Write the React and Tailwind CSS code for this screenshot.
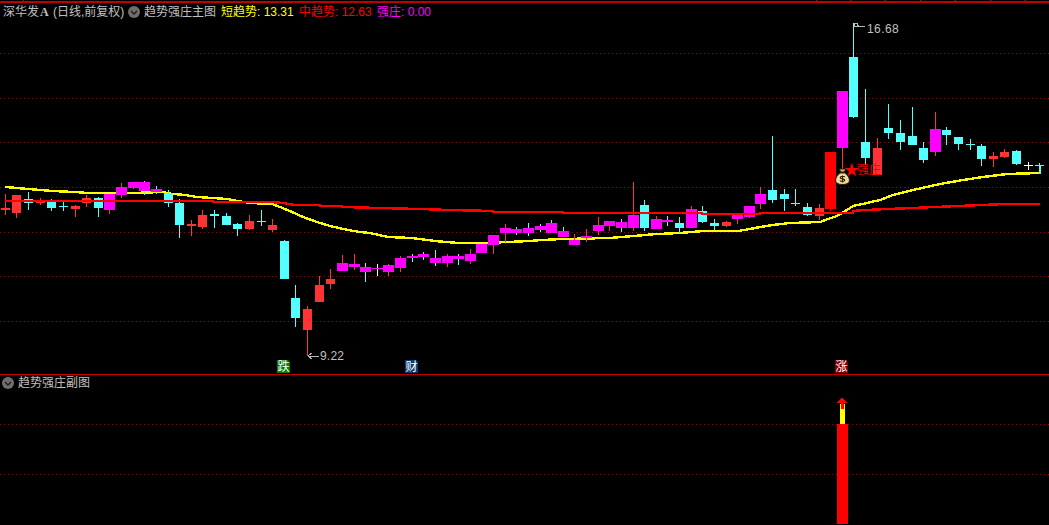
const FONT = "font-['Liberation_Sans','Noto_Sans_CJK_SC',sans-serif]";

const r = "#ff3333";
const c = "#54ffff";
const m = "#ff00ff";
const w = "#ffffff";

// left, width, body top, body bottom, wick top, wick bottom, colour, wick colour
const candles = [
  [1, 9, 208, 210, 194, 215, r],
  [12, 9, 195, 213, 195, 218, r],
  [24, 9, 199, 203, 192, 210, c],
  [36, 9, 202, 203, 198, 205, r],
  [47, 9, 202, 208, 199, 211, c],
  [59, 9, 206, 207, 202, 211, c],
  [71, 9, 206, 209, 205, 217, r],
  [82, 9, 198, 203, 195, 207, r],
  [94, 9, 198, 208, 197, 217, c],
  [104, 11, 194, 210, 194, 214, m, r],
  [116, 11, 187, 195, 183, 198, m, r],
  [128, 11, 182, 188, 182, 189, m, r],
  [139, 11, 182, 191, 181, 195, m, c],
  [151, 11, 189, 192, 186, 194, m, c],
  [164, 9, 193, 203, 190, 207, c],
  [175, 9, 203, 225, 199, 238, c],
  [187, 9, 224, 226, 220, 236, r],
  [198, 9, 215, 227, 210, 229, r],
  [210, 9, 214, 216, 210, 228, c],
  [222, 9, 216, 225, 213, 225, c],
  [233, 9, 224, 229, 223, 236, c],
  [245, 9, 221, 229, 215, 230, r],
  [257, 9, 221, 222, 210, 226, c],
  [268, 9, 225, 230, 219, 232, r],
  [280, 9, 241, 279, 240, 279, c],
  [291, 9, 298, 318, 285, 327, c],
  [303, 9, 309, 330, 306, 356, r],
  [315, 9, 285, 302, 276, 302, r],
  [326, 9, 279, 284, 269, 289, r],
  [337, 11, 263, 271, 255, 271, m, r],
  [349, 11, 264, 267, 254, 270, m, r],
  [360, 11, 267, 272, 263, 282, m, c],
  [372, 11, 268, 269, 264, 276, m, w],
  [383, 11, 265, 272, 264, 276, m, r],
  [395, 11, 258, 268, 256, 272, m, r],
  [407, 11, 256, 258, 254, 262, m, c],
  [418, 11, 254, 257, 252, 260, m, c],
  [430, 11, 258, 263, 250, 266, m, c],
  [442, 11, 256, 263, 254, 267, m, r],
  [453, 11, 256, 259, 254, 265, m, c],
  [465, 11, 254, 261, 249, 264, m, r],
  [476, 11, 244, 253, 244, 253, m],
  [488, 11, 235, 245, 235, 254, m, r],
  [500, 11, 228, 233, 224, 242, m, r],
  [511, 11, 229, 233, 227, 235, m, c],
  [523, 11, 228, 233, 223, 236, m, c],
  [535, 11, 226, 230, 224, 232, m, c],
  [546, 11, 223, 233, 220, 233, m, c],
  [558, 11, 231, 237, 227, 237, m, c],
  [569, 11, 240, 245, 234, 245, m, r],
  [581, 11, 236, 238, 229, 242, m, r],
  [593, 11, 225, 231, 217, 235, m, r],
  [604, 11, 221, 226, 221, 231, m, r],
  [616, 11, 222, 228, 219, 232, m, c],
  [628, 11, 215, 228, 182, 231, m, r],
  [640, 9, 205, 228, 200, 231, c],
  [651, 11, 219, 229, 216, 229, m, r],
  [662, 11, 220, 222, 216, 226, m, c],
  [675, 9, 223, 228, 217, 233, c],
  [686, 11, 209, 228, 206, 228, m, r],
  [698, 9, 211, 222, 206, 223, c],
  [710, 9, 223, 226, 219, 230, c],
  [722, 9, 222, 226, 221, 227, r],
  [732, 11, 215, 219, 215, 224, m, r],
  [744, 11, 206, 217, 206, 218, m, r],
  [755, 11, 194, 204, 187, 209, m, r],
  [768, 9, 190, 200, 136, 203, c],
  [780, 9, 194, 199, 189, 211, c],
  [791, 9, 203, 204, 189, 206, c],
  [803, 9, 207, 215, 203, 216, c],
  [815, 9, 208, 216, 204, 220, r],
  [825, 11, 152, 209, 152, 211, "#ff0000"],
  [837, 11, 91, 148, 91, 170, m, r],
  [849, 9, 57, 117, 23, 118, c],
  [861, 9, 142, 158, 89, 165, c],
  [873, 9, 148, 175, 138, 175, r],
  [884, 9, 128, 133, 104, 139, c],
  [896, 9, 133, 142, 120, 150, c],
  [908, 9, 136, 145, 107, 145, c],
  [919, 9, 148, 160, 142, 163, c],
  [930, 11, 129, 152, 112, 156, m, r],
  [942, 9, 130, 135, 127, 145, c],
  [954, 9, 137, 144, 137, 150, c],
  [966, 9, 144, 145, 139, 150, c],
  [977, 9, 146, 159, 144, 166, c],
  [989, 9, 156, 159, 152, 167, r],
  [1000, 9, 152, 157, 149, 158, r],
  [1012, 9, 151, 164, 150, 165, c],
  [1024, 9, 165, 166, 162, 170, w],
  [1035, 9, 165, 166, 163, 174, c],
];

const yellowLine =
  "5,187 17,188 28,189 40,190 52,191 75,192 87,193 115,193 133,193 162,192 173,194 185,195 197,197 213,198 227,199 238,201 250,203 272,204 280,207 292,212 303,217 317,222 330,226 348,230 360,232 370,233 388,237 412,238 435,241 458,243 487,243 507,242 530,241 542,240 563,239 610,238 622,237 645,235 657,234 680,233 692,232 703,231 738,231 750,229 760,227 773,225 790,223 820,222 828,219 837,216 847,210 853,206 867,203 880,200 893,195 913,190 940,184 963,180 983,177 1007,174 1040,173";

const redLine =
  "5,201 213,201 213,202 272,202 283,203 295,205 320,205 320,206 342,206 342,207 380,208 420,209 450,210 493,211 493,212 563,212 563,213 702,213 702,214 760,214 760,213 853,213 853,211 865,210 888,209 912,208 935,207 958,206 982,205 1005,204 1040,204";

const gridTop = [53, 98, 142, 187, 232, 276, 321];
const gridBottom = [424, 474];
const ticks = [23, 816, 850, 885, 920, 955, 990, 1025];

function Toggle() {
  return (
    <svg width="12" height="12" viewBox="0 0 12 12" className="shrink-0">
      <circle cx="6" cy="6" r="6" fill="#6e6e6e" />
      <path d="M3 5l3 3 3-3" fill="none" stroke="#1c1c1c" strokeWidth="1.4" />
    </svg>
  );
}

function Candle({ data }) {
  const [left, width, top, bottom, wickTop, wickBottom, color, wick] = data;
  return (
    <g>
      <rect x={left + Math.floor(width / 2)} y={wickTop} width="1" height={wickBottom - wickTop} fill={wick || color} />
      <rect x={left} y={top} width={width} height={bottom - top} fill={color} />
    </g>
  );
}

function MoneyBag() {
  return (
    <svg width="15" height="17" viewBox="0 0 15 17" className="absolute left-[835px] top-[168px]">
      <path d="M4 1h7l-2 3h-3z" fill="#e0b860" stroke="#2e1e08" strokeWidth="1" />
      <path d="M5.500 4.500h4c3 2 5 5 5 8 0 3-3 4-7 4s-7-1-7-4c0-3 2-6 5-8z" fill="#efdca0" stroke="#2e1e08" strokeWidth="1.1" />
      <path d="M5 5.500h5" stroke="#a87828" strokeWidth="1" />
      <path d="M9.800 9c-.6-1-4.400-1-4.600.5-.2 1.700 4.800 1 4.600 2.800-.2 1.500-4.200 1.400-4.800.2M7.500 7.500v7" fill="none" stroke="#2e1e08" strokeWidth="1.1" />
    </svg>
  );
}

function Badge({ text, left, color }) {
  return (
    <span
      className={`absolute top-[360px] flex h-[13px] w-[13px] items-center justify-center overflow-hidden text-[12px] leading-none text-white [clip-path:polygon(0_0,85%_0,100%_15%,100%_100%,0_100%)] ${color} ${left}`}
    >
      {text}
    </span>
  );
}

export default function App() {
  return (
    <div className={`flex h-[525px] w-full flex-col overflow-hidden bg-black text-[12px] leading-none text-[#c0c0c0] ${FONT}`}>
      <section className="relative h-[374px] shrink-0">
        <svg width="1049" height="374" viewBox="0 0 1049 374" shapeRendering="crispEdges" className="absolute inset-0">
          <rect x="0" y="1" width="1049" height="2" fill="#c00000" />
          {ticks.map((x) => (
            <rect key={x} x={x} y="0" width="1" height="2" fill="#c00000" />
          ))}
          {gridTop.map((y) => (
            <line key={y} x1="0" x2="1049" y1={y + 0.5} y2={y + 0.5} stroke="#a00000" strokeDasharray="1 3" />
          ))}
          <polyline points={yellowLine} fill="none" stroke="#ffff00" strokeWidth="2.4" />
          <rect x="1040" y="165" width="1" height="9" fill={c} />
          {candles.map((item) => (
            <Candle key={item[0]} data={item} />
          ))}
          <polyline points={redLine} fill="none" stroke="#ff0000" strokeWidth="2.4" />
          <path d="M854 23h3v3h-3zM857 25l3 2 3-1 2 1" fill="none" stroke="#b8b8b8" />
          <path d="M308 356h11M308 356l4-3M308 356l4 3" fill="none" stroke="#b8b8b8" />
        </svg>

        <header className="relative flex items-center whitespace-nowrap pl-[3px] pt-[6px]">
          <span>深华发</span>
          <span className="ml-[1px] w-[10px] font-['Liberation_Serif',serif] font-bold">A</span>
          <span className="ml-[3px] w-[75px]">(日线,前复权)</span>
          <Toggle />
          <span className="ml-[4px] w-[77px]">趋势强庄主图</span>
          <span className="w-[78px] text-[#ffff00]">短趋势: 13.31</span>
          <span className="w-[78px] text-[#ff0000]">中趋势: 12.63</span>
          <span className="text-[#ff00ff]">强庄: 0.00</span>
        </header>

        <span className="absolute left-[867px] top-[23px] tracking-[0.4px]">16.68</span>
        <span className="absolute left-[320px] top-[350px] tracking-[0.2px]">9.22</span>
        <div className="absolute left-[844px] top-[162px] flex items-center text-[#ff0000]">
          <span className="w-[13px] text-[15px]">★</span>
          <span>强庄</span>
        </div>
        <MoneyBag />
        <Badge text="跌" left="left-[277px]" color="bg-[#007f00]" />
        <Badge text="财" left="left-[405px]" color="bg-[#0c3c70]" />
        <Badge text="涨" left="left-[835px]" color="bg-[#800000]" />
      </section>

      <section className="relative flex-1 border-t border-[#c00000]">
        <svg width="1049" height="150" viewBox="0 375 1049 150" shapeRendering="crispEdges" className="absolute inset-0">
          {gridBottom.map((y) => (
            <line key={y} x1="0" x2="1049" y1={y + 0.5} y2={y + 0.5} stroke="#a00000" strokeDasharray="1 3" />
          ))}
          <rect x="840" y="404" width="5" height="20" fill="#ffff00" />
          <rect x="837" y="424" width="11" height="100" fill="#ff0000" />
          <path d="M842 397l5 6h-3v6h-3v-6h-4z" fill="#ff0000" />
        </svg>
        <div className="relative flex items-center gap-[4px] pl-[2px] pt-[2px]">
          <Toggle />
          <span>趋势强庄副图</span>
        </div>
      </section>
    </div>
  );
}
